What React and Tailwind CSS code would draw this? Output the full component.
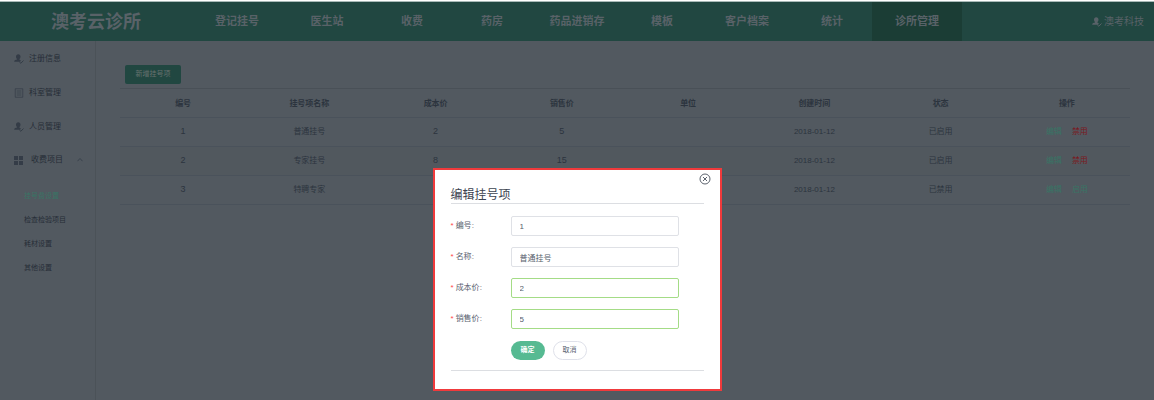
import React from "react";

const navItems = [
  { label: "登记挂号", wide: true },
  { label: "医生站", wide: true },
  { label: "收费" },
  { label: "药房" },
  { label: "药品进销存", wide: true },
  { label: "模板" },
  { label: "客户档案", wide: true },
  { label: "统计" },
  { label: "诊所管理", wide: true, active: true },
];

const subItems = ["挂号费设置", "检查检验项目", "耗材设置", "其他设置"];
const columns = ["编号", "挂号项名称", "成本价", "销售价", "单位", "创建时间", "状态", "操作"];
const rows = [
  { id: 1, name: "普通挂号", cost: 2, price: 5, date: "2018-01-12", enabled: true },
  { id: 2, name: "专家挂号", cost: 8, price: 15, date: "2018-01-12", enabled: true },
  { id: 3, name: "特聘专家", cost: "", price: "", date: "2018-01-12", enabled: false },
];
const fields = [
  { id: "item-id", label: "编号", value: "1" },
  { id: "item-name", label: "名称", value: "普通挂号" },
  { id: "item-cost", label: "成本价", value: "2", valid: true },
  { id: "item-price", label: "销售价", value: "5", valid: true },
];

function UserIcon({ className }) {
  return (
    <svg viewBox="0 0 20 20" className={className} fill="currentColor" aria-hidden="true">
      <path d="M8.500 0.500c2.800 0 4.500 2 4.500 4.700 0 2-.8 3.900-2 4.900v1.600l3 1.400-2 2.600H.5v-1.200c0-1.300.8-1.900 2-2.300l3.500-1.300v-.8C4.800 9.100 4 7.200 4 5.200 4 2.500 5.700.5 8.500.5z" />
      <path d="M10.500 15.500l3.200 3 5.300-5.500" fill="none" stroke="currentColor" strokeWidth="2" />
    </svg>
  );
}

function DocIcon({ className }) {
  return (
    <svg viewBox="0 0 20 20" className={className} fill="none" stroke="currentColor" strokeWidth="1.400" aria-hidden="true">
      <path d="M2.500 1.500h15v17h-15zM5.500 6h9M5.500 10h9M5.500 14h9" />
    </svg>
  );
}

function GridIcon({ className }) {
  return (
    <svg viewBox="0 0 9 9" className={className} fill="currentColor" aria-hidden="true">
      <path d="M0 0h4v4H0zM5 0h4v4H5zM0 5h4v4H0zM5 5h4v4H5z" />
    </svg>
  );
}

function Header() {
  return (
    <header className="flex h-[39px] items-center bg-[#214741] text-[#596268]">
      <h1 className="w-48 text-center text-lg leading-none font-bold">澳考云诊所</h1>
      <nav className="flex h-full">
        {navItems.map((n) => (
          <a
            key={n.label}
            href="#"
            className={`flex items-center justify-center text-[11px] font-bold ${n.wide ? "w-[90px]" : "w-20"} ${n.active ? "bg-[#1b3d35]" : ""}`}
          >
            {n.label}
          </a>
        ))}
      </nav>
      <a href="#" className="ml-auto flex items-center gap-0.5 pr-2.5 text-[10px]">
        <UserIcon className="size-[10px]" />
        澳考科技
      </a>
    </header>
  );
}

function Sidebar() {
  return (
    <aside className="w-24 shrink-0 border-r border-[#4b5258] pt-px text-[8px] text-[#262d37]">
      {[
        ["注册信息", UserIcon],
        ["科室管理", DocIcon],
        ["人员管理", UserIcon],
      ].map(([label, Icon]) => (
        <a key={label} href="#" className="flex h-[34px] items-center gap-[5px] pl-3.5">
          <Icon className="size-[10px] text-[#343c47]" />
          {label}
        </a>
      ))}
      <button type="button" className="flex h-8 w-full items-center pl-3.5">
        <GridIcon className="size-[9px] text-[#343c47]" />
        <span className="ml-2">收费项目</span>
        <svg viewBox="0 0 6 6" className="ml-3.5 size-1.5" fill="none" stroke="#343c47" strokeWidth="0.800" aria-hidden="true">
          <path d="M0.500 4.200L3 1.500L5.500 4.200" />
        </svg>
      </button>
      <ul className="mt-2 text-[7px]">
        {subItems.map((s, i) => (
          <li key={s}>
            <a href="#" className={`flex h-6 items-center pl-6 ${i === 0 ? "text-[#397465]" : ""}`}>
              {s}
            </a>
          </li>
        ))}
      </ul>
    </aside>
  );
}

function ItemTable() {
  return (
    <table className="w-full table-fixed border-t border-[#495057] text-center text-[8px] text-[#2c343e]">
      <thead>
        <tr className="h-[29px] border-b border-[#4a525b]">
          {columns.map((c) => (
            <th key={c} className="pt-0.5 font-bold">{c}</th>
          ))}
        </tr>
      </thead>
      <tbody>
        {rows.map((r) => (
          <tr key={r.id} className="h-[29px] border-b border-[#4a525b] even:bg-[#51585e]">
            <td className="text-[9px]">{r.id}</td>
            <td>{r.name}</td>
            <td className="text-[9px]">{r.cost}</td>
            <td className="text-[9px]">{r.price}</td>
            <td></td>
            <td>{r.date}</td>
            <td>{r.enabled ? "已启用" : "已禁用"}</td>
            <td>
              <div className="flex justify-center gap-2.5">
                <button type="button" className="text-[#397465]">编辑</button>
                <button type="button" className={r.enabled ? "text-[#7c1820]" : "text-[#397465]"}>
                  {r.enabled ? "禁用" : "启用"}
                </button>
              </div>
            </td>
          </tr>
        ))}
      </tbody>
    </table>
  );
}

function EditDialog() {
  return (
    <div className="fixed inset-0 flex items-start justify-center pt-[168px]">
      <div
        role="dialog"
        aria-modal="true"
        aria-labelledby="dialog-title"
        className="relative w-[289px] border-2 border-[#f03a3c] bg-white px-4 pt-[17px] pb-[18px] text-[#5a6270]"
      >
        <button type="button" aria-label="关闭" className="absolute top-[3px] right-[9px] text-[#4b515e]">
          <svg viewBox="0 0 12 12" className="size-3" fill="none" stroke="currentColor" strokeWidth="0.900">
            <circle cx="6" cy="6" r="5" />
            <path d="M4 4l4 4M8 4l-4 4" />
          </svg>
        </button>
        <h2 id="dialog-title" className="border-b border-[#dcdee2] text-xs leading-4 text-[#3c4350]">
          编辑挂号项
        </h2>
        <form className="mt-3 border-b border-[#dcdee2] pb-2.5" onSubmit={(e) => e.preventDefault()}>
          <div className="flex flex-col gap-[11px]">
            {fields.map((f) => (
              <div key={f.id} className="flex h-5 items-center">
                <label htmlFor={f.id} className="w-[60px] text-[8px] leading-4">
                  <span className="mr-0.5 text-[#ff4949]">*</span>
                  {f.label}:
                </label>
                <input
                  id={f.id}
                  defaultValue={f.value}
                  className={`h-5 w-[168px] rounded-xs border bg-white px-2 text-[8px] text-[#565e6b] outline-none ${f.valid ? "border-[#a4dc86]" : "border-[#dfe1e6]"}`}
                />
              </div>
            ))}
          </div>
          <div className="mt-3 flex gap-2 pl-[60px] text-[7px]">
            <button type="submit" className="h-[19px] w-[34px] rounded-full bg-[#56ba92] font-bold text-white">
              确定
            </button>
            <button type="button" className="h-[19px] w-[34px] rounded-full border border-[#dfe1ea]">
              取消
            </button>
          </div>
        </form>
      </div>
    </div>
  );
}

export default function App() {
  return (
    <div className="flex min-h-screen flex-col bg-[#525960] font-['Liberation_Sans','Noto_Sans_CJK_SC',sans-serif]">
      <div className="h-0.5 border-b border-[#a9bab8] bg-white" />
      <Header />
      <div className="flex flex-1">
        <Sidebar />
        <main className="min-w-0 flex-1 px-6 pt-6">
          <button type="button" className="ml-[5px] block h-[19px] w-14 rounded-xs bg-[#214741] text-[7px] text-[#66716f]">
            新增挂号项
          </button>
          <div className="mt-1">
            <ItemTable />
          </div>
        </main>
      </div>
      <EditDialog />
    </div>
  );
}
